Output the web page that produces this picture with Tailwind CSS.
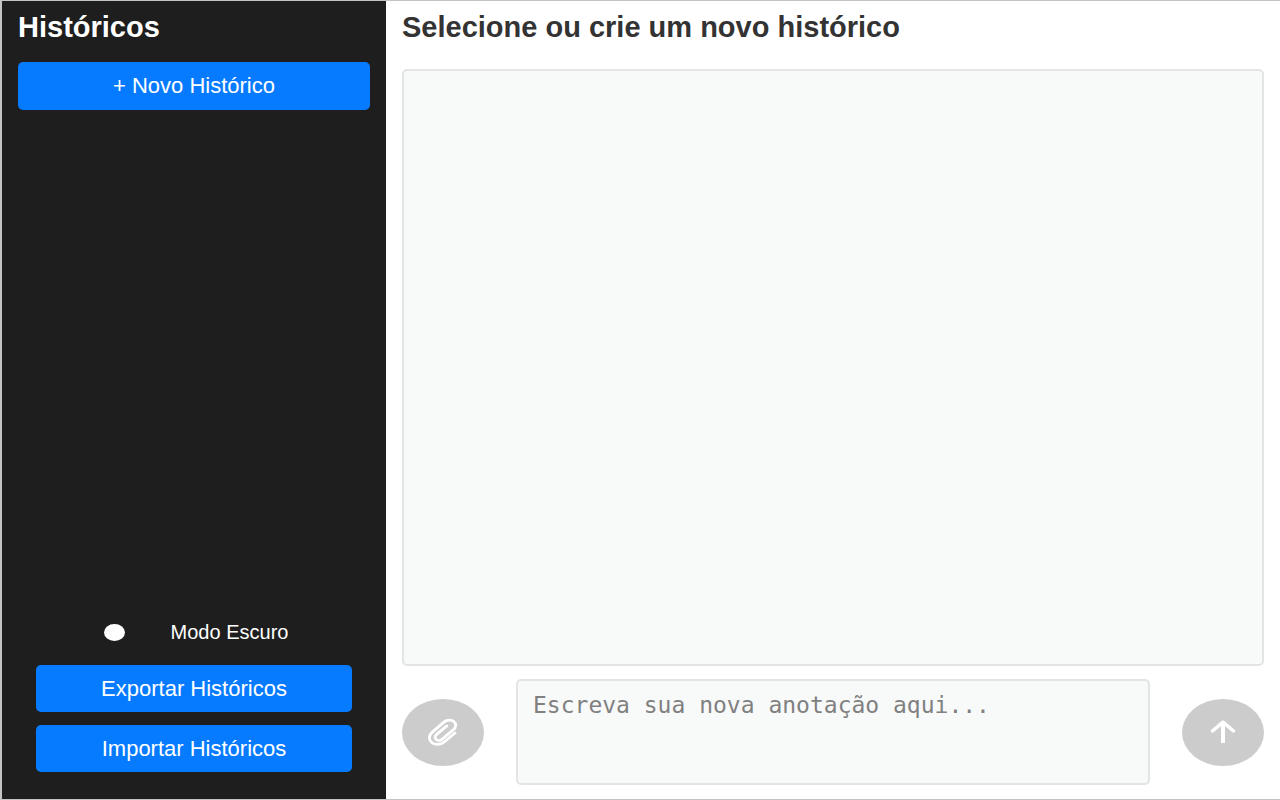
<!DOCTYPE html>
<html lang="pt-BR">
<head>
<meta charset="utf-8">
<meta name="viewport" content="width=device-width, initial-scale=1">
<title>Históricos</title>
<script src="https://cdn.jsdelivr.net/npm/@tailwindcss/browser@4"></script>
</head>
<body class="flex h-screen border-y border-l-2 border-[#c4c4c4] bg-white font-['Liberation_Sans',Arial,sans-serif]">
  <aside class="flex w-[30vw] shrink-0 flex-col bg-[#1e1e1e] p-4 pt-2 text-white">
    <h1 class="text-[29px] leading-9 font-bold">Históricos</h1>
    <button type="button" class="mt-[17px] h-12 rounded-[5px] bg-[#077bff] text-[22px] leading-7">+ Novo Histórico</button>
    <div class="mt-auto flex flex-col gap-[13px] px-[18px] pb-[11px]">
      <label class="mb-[6px] flex items-center justify-center gap-[46px] pl-1 text-[20px] leading-7">
        <input type="checkbox" class="h-[17px] w-[21px] appearance-none rounded-[50%] bg-white">
        <span>Modo Escuro</span>
      </label>
      <button type="button" class="h-[47px] rounded-[5px] bg-[#077bff] text-[22px] leading-7">Exportar Históricos</button>
      <button type="button" class="h-[47px] rounded-[5px] bg-[#077bff] text-[22px] leading-7">Importar Históricos</button>
    </div>
  </aside>
  <main class="flex min-w-0 flex-1 flex-col p-4 pt-2 pb-[14px]">
    <h2 class="text-[29px] leading-9 font-bold text-[#333]">Selecione ou crie um novo histórico</h2>
    <section aria-label="Anotações" class="mt-6 flex-1 rounded-[5px] border-2 border-[#e3e4e4] bg-[#f8faf9]"></section>
    <form class="mt-[13px] flex items-center gap-8">
      <button type="button" aria-label="Anexar arquivo" class="flex h-[67px] w-[82px] shrink-0 items-center justify-center rounded-[50%] bg-[#ccc]">
        <svg class="h-[28px] w-[30px]" viewBox="0 0 30 28" fill="none" stroke="#fff" stroke-width="2.8" stroke-linecap="round" stroke-linejoin="round" aria-hidden="true">
          <path d="M27 15 L16.5 23.8 C12.5 27.2 7 27.2 3.8 24.5 C.4 21.6 .6 17.2 4.3 14.1 L15.6 4.4 C18.4 2 22.8 1.2 25.6 3.4 C28.6 5.8 28.2 9.3 25.2 11.8 L14.2 21.1 C12.2 22.8 9.7 22.8 8.2 21.5 C6.5 20.1 6.8 18 8.7 16.4 L18.8 7.9"/>
        </svg>
      </button>
      <textarea aria-label="Nova anotação" placeholder="Escreva sua nova anotação aqui..." class="block h-[106px] min-w-0 flex-1 resize-none rounded-[5px] border-2 border-[#e3e4e4] bg-[#f8faf9] px-[15px] py-[10px] font-['DejaVu_Sans_Mono',monospace] text-[23px] leading-7 text-[#333] placeholder:text-[#808080]"></textarea>
      <button type="submit" aria-label="Enviar" class="flex h-[67px] w-[82px] shrink-0 items-center justify-center rounded-[50%] bg-[#ccc]">
        <svg class="h-[24px] w-[26px]" viewBox="0 0 26 24" fill="none" stroke="#fff" stroke-width="3.5" stroke-linecap="round" stroke-linejoin="round" aria-hidden="true">
          <path stroke-linecap="butt" stroke-width="4" d="M13 3 V23"/>
          <path d="M2.5 11 L13 2.2 L23.5 11"/>
        </svg>
      </button>
    </form>
  </main>
</body>
</html>
